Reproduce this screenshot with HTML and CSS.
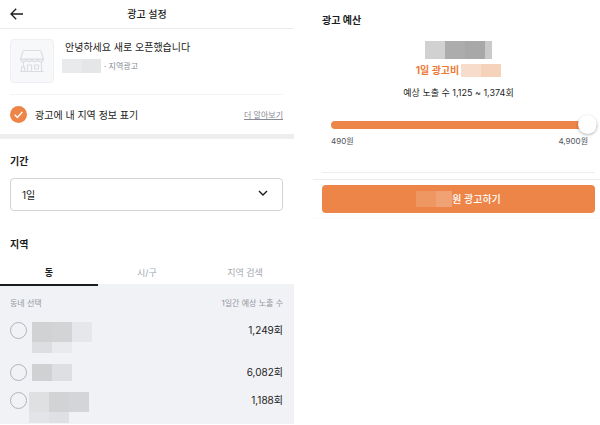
FILE: index.html
```
<!DOCTYPE html>
<html lang="ko">
<head>
  <meta charset="UTF-8">
  <meta name="viewport" content="width=device-width, initial-scale=1.0">
  <title>광고 설정</title>
  <link rel="stylesheet" href="styles.css">
</head>
<body>
  <div class="page">
    <!-- Settings -->
    <main class="settings">
      <header class="header">
        <button type="button" class="back-btn" aria-label="뒤로">
          <svg width="14" height="12" viewBox="0 0 14 12" fill="none" stroke="#1b1c20" stroke-width="1.3">
            <path d="M6.2 0.8L1 6l5.2 5.2M1 6h12"/>
          </svg>
        </button>
        <h1>광고 설정</h1>
      </header>

      <section class="ad-info">
        <div class="ad-card">
          <div class="thumb">
            <svg width="26" height="24" viewBox="0 0 26 24" fill="none" stroke="#dadde1" stroke-width="1.2" stroke-linejoin="round" stroke-linecap="round">
              <path d="M5.500 1.500h15c1 0 1.500.5 1.800 1.300l2.200 7.400H1.500l2.200-7.400c.3-.8.8-1.300 1.800-1.300z"/>
              <path d="M1.500 10.200a2.900 2.900 0 0 0 5.750 0a2.900 2.900 0 0 0 5.750 0a2.900 2.900 0 0 0 5.750 0a2.900 2.900 0 0 0 5.750 0"/>
              <path d="M4.500 13.500v4M22.500 13.500v8.500M2.500 18h3v4.500h-3zM8.500 22v-6h4v6M15.500 16h4v4h-4zM1.500 22.500h23"/>
            </svg>
          </div>
          <div class="ad-text">
            <p class="ad-title">안녕하세요 새로 오픈했습니다</p>
            <p class="ad-meta">
              <svg width="39" height="14" viewBox="0 0 39 14" shape-rendering="crispEdges">
                <rect width="20" height="14" fill="#e9eaeb"/>
                <rect x="20" width="19" height="14" fill="#e5e6e8"/>
              </svg>
              <span>· 지역광고</span>
            </p>
          </div>
        </div>

        <div class="region-row">
          <label class="check">
            <input type="checkbox" checked>
            <svg width="17" height="17" viewBox="0 0 17 17" fill="none">
              <circle cx="8.500" cy="8.500" r="8.500" fill="#ee8548"/>
              <path d="M4.700 8.700l2.700 2.700 4.900-5.400" stroke="#fff" stroke-width="1.400"/>
            </svg>
            <span>광고에 내 지역 정보 표기</span>
          </label>
          <a href="#" class="more">더 알아보기</a>
        </div>
      </section>

      <section class="period">
        <label for="period" class="section-title">기간</label>
        <div class="select-box">
          <select id="period">
            <option>1일</option>
          </select>
          <svg class="chevron" width="10" height="6" viewBox="0 0 10 6" fill="none" stroke="#1b1c20" stroke-width="1.400">
            <path d="M1 1l4 4 4-4"/>
          </svg>
        </div>
      </section>

      <section class="region">
        <h2 class="section-title">지역</h2>
        <div class="tabs" role="tablist">
          <button type="button" role="tab" class="tab active" aria-selected="true">동</button>
          <button type="button" role="tab" class="tab">시/구</button>
          <button type="button" role="tab" class="tab">지역 검색</button>
        </div>
        <div class="town-panel">
          <div class="town-head">
            <span>동네 선택</span>
            <span>1일간 예상 노출 수</span>
          </div>
          <div class="town-list">
            <label class="town">
              <input type="radio" name="town">
              <svg width="63" height="31" viewBox="0 0 63 31" shape-rendering="crispEdges">
                <rect x="3" width="20" height="20" fill="#d1d2d3"/>
                <rect x="23" width="20" height="20" fill="#d3d4d6"/>
                <rect x="43" width="20" height="20" fill="#e6e7ea"/>
                <rect x="3" y="20" width="20" height="11" fill="#dddee1"/>
                <rect x="23" y="20" width="20" height="11" fill="#e9eaee"/>
              </svg>
              <span class="count">1,249회</span>
            </label>
            <label class="town">
              <input type="radio" name="town">
              <svg width="63" height="17" viewBox="0 0 63 17" shape-rendering="crispEdges">
                <rect x="3" width="20" height="17" fill="#d0d1d2"/>
                <rect x="23" width="20" height="17" fill="#dedfe3"/>
              </svg>
              <span class="count">6,082회</span>
            </label>
            <label class="town">
              <input type="radio" name="town">
              <svg width="63" height="31" viewBox="0 0 63 31" shape-rendering="crispEdges">
                <rect width="20" height="20" fill="#dfe0e2"/>
                <rect x="20" width="20" height="20" fill="#d2d3d4"/>
                <rect x="40" width="20" height="20" fill="#d4d5d8"/>
                <rect y="20" width="20" height="11" fill="#e3e4e7"/>
                <rect x="20" y="20" width="20" height="11" fill="#dfe0e4"/>
              </svg>
              <span class="count">1,188회</span>
            </label>
          </div>
        </div>
      </section>
    </main>

    <!-- Budget -->
    <aside class="budget">
      <div class="budget-body">
        <h2 class="section-title"><label for="budget">광고 예산</label></h2>
        <div class="summary">
          <svg width="67" height="18" viewBox="0 0 67 18" shape-rendering="crispEdges">
            <rect width="20" height="18" fill="#d1d1d1"/>
            <rect x="20" width="20" height="18" fill="#acacac"/>
            <rect x="40" width="20" height="18" fill="#a8a8a8"/>
            <rect x="60" width="7" height="18" fill="#cacaca"/>
          </svg>
          <p class="daily">
            <span>1일 광고비</span>
            <svg width="40" height="13" viewBox="0 0 40 13" shape-rendering="crispEdges">
              <rect width="20" height="13" fill="#f8dccb"/>
              <rect x="20" width="20" height="13" fill="#f7d2bb"/>
            </svg>
          </p>
          <p class="expected">예상 노출 수 1,125 ~ 1,374회</p>
        </div>
        <div class="slider">
          <input type="range" id="budget" min="490" max="4900" value="4900">
          <div class="slider-labels">
            <span>490원</span>
            <span>4,900원</span>
          </div>
        </div>
      </div>
      <div class="footer">
        <button type="button" class="submit-btn">
          <svg width="36" height="16" viewBox="0 0 36 16" shape-rendering="crispEdges">
            <rect width="20" height="16" fill="#ef9763"/>
            <rect x="20" width="16" height="16" fill="#f1a275"/>
          </svg>
          <span>원 광고하기</span>
        </button>
      </div>
    </aside>
  </div>
</body>
</html>
```
FILE: styles.css
```
* {
  margin: 0;
  padding: 0;
  box-sizing: border-box;
}

body {
  background-color: #fff;
  color: #1b1c20;
  font-family: Inter, 'Noto Sans CJK KR', sans-serif;
  font-size: 10px;
  line-height: 16px;
}

button,
select {
  font: inherit;
  color: inherit;
  background: none;
  border: none;
}

button {
  cursor: pointer;
}

svg {
  display: block;
  flex-shrink: 0;
}

.page {
  display: grid;
  grid-template-columns: 294fr 287fr;
  gap: 19px;
  align-items: start;
}

/* header */
.header {
  display: grid;
  grid-template-columns: 14px 1fr 14px;
  align-items: center;
  height: 29px;
  padding: 0 10px;
  border-bottom: 1px solid #ececee;
}

.header h1 {
  font-size: 10px;
  font-weight: 500;
  text-align: center;
}

/* ad info */
.ad-info {
  padding: 0 11px 0 10px;
  border-bottom: 5px solid #eee;
}

.ad-card {
  display: flex;
  gap: 8px;
  padding: 10px 0 11px;
  border-bottom: 1px solid #f3f4f5;
}

.thumb {
  display: flex;
  align-items: center;
  justify-content: center;
  width: 44px;
  height: 44px;
  background-color: #f7f8fa;
  border: 1px solid #eeeff2;
  border-radius: 4px;
}

.ad-title {
  padding: 0 3px 4px;
}

.ad-meta {
  display: flex;
  align-items: center;
  gap: 3px;
  color: #868b94;
  font-size: 8px;
  line-height: 14px;
}

.region-row {
  display: flex;
  align-items: center;
  justify-content: space-between;
  height: 39px;
}

.check {
  display: flex;
  align-items: center;
  gap: 8px;
}

.check input {
  position: absolute;
  opacity: 0;
}

.more {
  color: #868b94;
  font-size: 8px;
}

/* period */
.section-title {
  display: block;
  font-size: 10px;
  font-weight: 700;
}

.period {
  padding: 14px 11px 0 10px;
}

.select-box {
  position: relative;
  margin-top: 9px;
}

.select-box select {
  appearance: none;
  width: 100%;
  height: 33px;
  padding: 0 11px;
  border: 1px solid #d1d3d8;
  border-radius: 4px;
}

.chevron {
  position: absolute;
  top: 12px;
  right: 15px;
  pointer-events: none;
}

/* region */
.region {
  padding-top: 25px;
}

.region .section-title {
  padding: 0 10px;
}

.tabs {
  display: grid;
  grid-template-columns: repeat(3, 1fr);
  margin-top: 8px;
}

.tab {
  height: 26px;
  padding-top: 2px;
  color: #a4a8b0;
  font-size: 9px;
  border-bottom: 2px solid #f1f2f6;
}

.tab.active {
  color: #1b1c20;
  font-weight: 700;
  border-bottom-color: #1b1c20;
}

.town-panel {
  padding: 9px 11px 1px 10px;
  background-color: #f1f2f6;
}

.town-head {
  display: flex;
  justify-content: space-between;
  color: #93969e;
  font-size: 8px;
}

.town-list {
  display: grid;
  gap: 11px;
  margin-top: 11px;
}

.town {
  display: flex;
  align-items: flex-start;
  gap: 2px;
}

.town input {
  appearance: none;
  width: 17px;
  height: 17px;
  border: 1px solid #b0b3ba;
  border-radius: 50%;
}

.town input:checked {
  border: 5px solid #ee8548;
}

.count {
  margin-left: auto;
}

/* budget */
.budget-body {
  margin: 0 5px 0 9px;
  padding: 12px 0 24px;
  border-bottom: 1px solid #eee;
}

.summary {
  display: flex;
  flex-direction: column;
  align-items: center;
  margin-top: 13px;
}

.daily {
  display: flex;
  align-items: center;
  gap: 2px;
  margin-top: 3px;
  color: #ee7a38;
  font-weight: 700;
}

.expected {
  margin-top: 7px;
  font-size: 9px;
}

.slider {
  margin: 14px 0 0 9px;
}

.slider input {
  appearance: none;
  display: block;
  width: calc(100% + 2px);
  height: 19px;
  background: none;
}

.slider input::-webkit-slider-runnable-track {
  height: 8px;
  background-color: #ee8548;
  border-radius: 4px;
}

.slider input::-webkit-slider-thumb {
  appearance: none;
  width: 19px;
  height: 19px;
  margin-top: -6px;
  background-color: #fff;
  border-radius: 50%;
  box-shadow: 0 1px 3px rgba(0, 0, 0, 0.3);
}

.slider-labels {
  display: flex;
  justify-content: space-between;
  padding-right: 7px;
  color: #4d5159;
  font-size: 8px;
  line-height: 14px;
}

.footer {
  margin-top: 6px;
  padding: 5px 5px 5px 9px;
  border-top: 1px solid #ececee;
  border-bottom: 1px solid #fafafa;
}

.submit-btn {
  display: flex;
  align-items: center;
  justify-content: center;
  width: 100%;
  height: 28px;
  color: #fff;
  font-weight: 500;
  background-color: #ee8548;
  border-radius: 4px;
}
```
